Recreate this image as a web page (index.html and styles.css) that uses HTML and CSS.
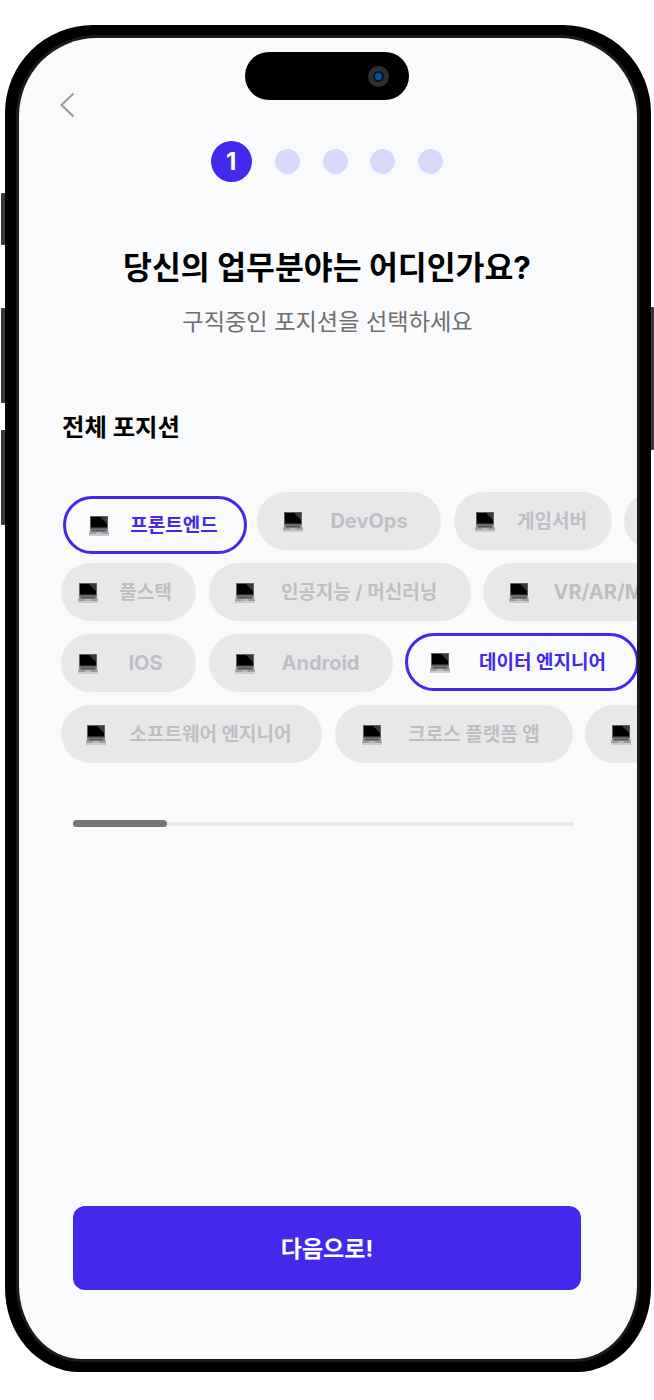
FILE: index.html
```html
<!DOCTYPE html>
<html lang="ko">

    <head>
        <meta charset="UTF-8">
        <meta name="viewport" content="width=device-width, initial-scale=1.0">
        <title>포지션 선택</title>
        <link rel="stylesheet" href="styles.css">
    </head>

    <body>
        <svg class="sprite" width="0" height="0">
            <symbol id="laptop" viewBox="0 0 20 20">
                <rect x="1" y="0" width="18" height="13" fill="#5e6062" />
                <rect x="2" y="1" width="16" height="10.5" fill="#000" />
                <path d="M11 1h7v7z" fill="#3a3a3c" />
                <path d="M1 13h18l1 5.5H0z" fill="#9a9ca0" />
                <rect x="2.5" y="13.5" width="15" height="2" fill="#55565a" />
                <rect x="7" y="16" width="6" height="2.5" fill="#b4b6ba" />
                <rect x="0" y="18" width="20" height="2" fill="#c8cacd" />
            </symbol>
        </svg>

        <div class="side-btn side-btn-mute"></div>
        <div class="side-btn side-btn-up"></div>
        <div class="side-btn side-btn-down"></div>
        <div class="side-btn side-btn-power"></div>

        <div class="phone">
            <div class="screen">
                <div class="island">
                    <div class="camera"><div class="lens"></div></div>
                </div>

                <button class="back" aria-label="back">
                    <svg width="16" height="26" viewBox="0 0 16 26">
                        <path d="M14.5 1.5 2.5 13l12 11.5" fill="none" stroke="#9c9c9c" stroke-width="2.2" />
                    </svg>
                </button>

                <div class="steps">
                    <span class="step-current">1</span>
                    <span class="step"></span>
                    <span class="step"></span>
                    <span class="step"></span>
                    <span class="step"></span>
                </div>

                <h1 class="title">당신의 업무분야는 어디인가요?</h1>
                <p class="subtitle">구직중인 포지션을 선택하세요</p>

                <h2 class="section-title">전체 포지션</h2>

                <div class="chips">
                    <div class="chip-row">
                        <div class="chip chip-first selected"><svg class="ico"><use href="#laptop" /></svg><span>프론트엔드</span></div>
                        <div class="chip chip-184 latin"><svg class="ico"><use href="#laptop" /></svg><span>DevOps</span></div>
                        <div class="chip chip-158"><svg class="ico"><use href="#laptop" /></svg><span>게임서버</span></div>
                        <div class="chip chip-158"><svg class="ico"><use href="#laptop" /></svg><span>임베디드</span></div>
                    </div>
                    <div class="chip-row">
                        <div class="chip chip-135"><svg class="ico"><use href="#laptop" /></svg><span>풀스택</span></div>
                        <div class="chip chip-262"><svg class="ico"><use href="#laptop" /></svg><span>인공지능 / 머신러닝</span></div>
                        <div class="chip chip-204 latin"><svg class="ico"><use href="#laptop" /></svg><span>VR/AR/MR</span></div>
                    </div>
                    <div class="chip-row">
                        <div class="chip chip-135 latin"><svg class="ico"><use href="#laptop" /></svg><span>IOS</span></div>
                        <div class="chip chip-184 latin"><svg class="ico"><use href="#laptop" /></svg><span>Android</span></div>
                        <div class="chip chip-data selected"><svg class="ico"><use href="#laptop" /></svg><span>데이터 엔지니어</span></div>
                    </div>
                    <div class="chip-row">
                        <div class="chip chip-261"><svg class="ico"><use href="#laptop" /></svg><span>소프트웨어 엔지니어</span></div>
                        <div class="chip chip-238"><svg class="ico"><use href="#laptop" /></svg><span>크로스 플랫폼 앱</span></div>
                        <div class="chip chip-184"><svg class="ico"><use href="#laptop" /></svg><span>보안</span></div>
                    </div>
                </div>

                <div class="scroll-track">
                    <div class="scroll-thumb"></div>
                </div>

                <button class="next-btn">다음으로!</button>
            </div>
        </div>
    </body>

</html>
```

FILE: styles.css
```css
* {
    margin: 0;
    padding: 0;
    box-sizing: border-box;
    font-family: Inter, "Noto Sans CJK KR", sans-serif;
}

body {
    width: 654px;
    height: 1400px;
    position: relative;
    background-color: #fff;
    overflow: hidden;
}

.sprite {
    position: absolute;
}

.phone {
    width: 646px;
    height: 1347px;
    margin: 25px 0 0 5px;
    padding: 13px 14px 13px 14px;
    background-color: #000;
    border-radius: 88px 88px 74px 74px / 88px 88px 84px 84px;
}

.screen {
    position: relative;
    display: flex;
    flex-direction: column;
    height: 100%;
    background-color: #f9fafc;
    border-radius: 78px 78px 62px 62px / 78px 78px 74px 74px;
    box-shadow: 0 0 0 3px #1b1b1b;
    overflow: hidden;
}

/* hardware bits */
.side-btn {
    position: absolute;
    width: 4px;
    left: 1px;
    background-color: #3a3a3a;
    border-radius: 1px 0 0 1px;
}

.side-btn-mute {
    top: 193px;
    height: 52px;
}

.side-btn-up {
    top: 308px;
    height: 95px;
}

.side-btn-down {
    top: 430px;
    height: 95px;
}

.side-btn-power {
    left: 651px;
    width: 3px;
    top: 307px;
    height: 143px;
    border-radius: 0 1px 1px 0;
}

.island {
    position: absolute;
    top: 14px;
    left: 226px;
    width: 164px;
    height: 48px;
    background-color: #000;
    border-radius: 24px;
}

.camera {
    position: absolute;
    top: 14px;
    right: 20px;
    width: 21px;
    height: 21px;
    border-radius: 50%;
    background-color: #2e2f33;
}

.lens {
    width: 11px;
    height: 11px;
    margin: 5px;
    border-radius: 50%;
    background-color: #0b4f9c;
    border: 2px solid #0a1524;
}

.back {
    width: 16px;
    height: 26px;
    margin: 54px 0 0 40px;
    background: none;
    border: none;
}

.steps {
    display: flex;
    align-items: center;
    justify-content: center;
    gap: 22.7px;
    height: 41px;
    margin-top: 23px;
    padding-right: 2px;
}

.step-current {
    width: 41px;
    height: 41px;
    padding-right: 1px;
    border-radius: 50%;
    background-color: #4428ec;
    color: #fff;
    font-size: 24px;
    font-weight: 700;
    line-height: 41px;
    text-align: center;
}

.step {
    width: 25px;
    height: 25px;
    border-radius: 50%;
    background-color: #d5dafd;
}

.title {
    margin-top: 66px;
    padding-right: 2px;
    color: #000;
    font-size: 31.4px;
    font-weight: 700;
    line-height: 40px;
    text-align: center;
}

.subtitle {
    margin-top: 16px;
    padding-right: 1px;
    color: #6f6f6f;
    font-size: 23.2px;
    font-weight: 400;
    line-height: 36px;
    text-align: center;
}

.section-title {
    margin: 71px 0 0 43px;
    color: #000;
    font-size: 24.4px;
    font-weight: 700;
    line-height: 32px;
}

.chips {
    display: flex;
    flex-direction: column;
    gap: 13px;
    margin-top: 49px;
    padding-left: 42px;
}

.chip-row {
    display: flex;
    gap: 12.5px;
    height: 58px;
}

.chip {
    display: flex;
    flex-shrink: 0;
    align-items: center;
    height: 58px;
    border-radius: 29px;
    background-color: #e8e8e8;
    color: #bcbfc5;
    font-size: 19px;
    font-weight: 700;
    white-space: nowrap;
}

.chip span {
    flex: 1;
    padding-bottom: 3px;
    text-align: center;
}

.latin {
    font-size: 20px;
}

.chip.latin span {
    padding-bottom: 0;
}

.ico {
    flex-shrink: 0;
    width: 20px;
    height: 20px;
    margin-top: 2px;
}

.chip-135 {
    width: 135px;
    padding: 0 3px 0 17px;
}

.chip-158 {
    width: 158px;
    padding: 0 2px 0 21px;
}

.chip-184 {
    width: 184px;
    padding: 0 6px 0 26px;
}

.chip-204 {
    width: 204px;
    padding: 0 6px 0 26px;
}

.chip-238 {
    width: 238px;
    padding: 0 6px 0 27px;
}

.chip-261 {
    width: 261px;
    padding: 0 7px 0 25px;
}

.chip-262 {
    width: 262px;
    padding: 0 7px 0 26px;
}

.selected {
    background-color: #f9fafc;
    border: 3px solid #4428ec;
    color: #4428ec;
}

.chip-first {
    width: 184px;
    margin: 4px -2.5px -4px 2px;
    padding: 0 5px 0 23px;
}

.chip-data {
    width: 234px;
    margin-top: -1px;
    padding: 0 1px 0 22px;
}

.scroll-track {
    width: 501px;
    height: 4px;
    margin: 59px 0 0 54px;
    border-radius: 2px;
    background-color: #e5e6e8;
}

.scroll-thumb {
    width: 94px;
    height: 7px;
    margin-top: -2px;
    border-radius: 4px;
    background-color: #777;
}

.next-btn {
    width: 508px;
    height: 84px;
    margin: auto 0 69px 54px;
    padding-bottom: 3px;
    border: none;
    border-radius: 12px;
    background-color: #4428ec;
    color: #fff;
    font-size: 23px;
    font-weight: 700;
}
```
